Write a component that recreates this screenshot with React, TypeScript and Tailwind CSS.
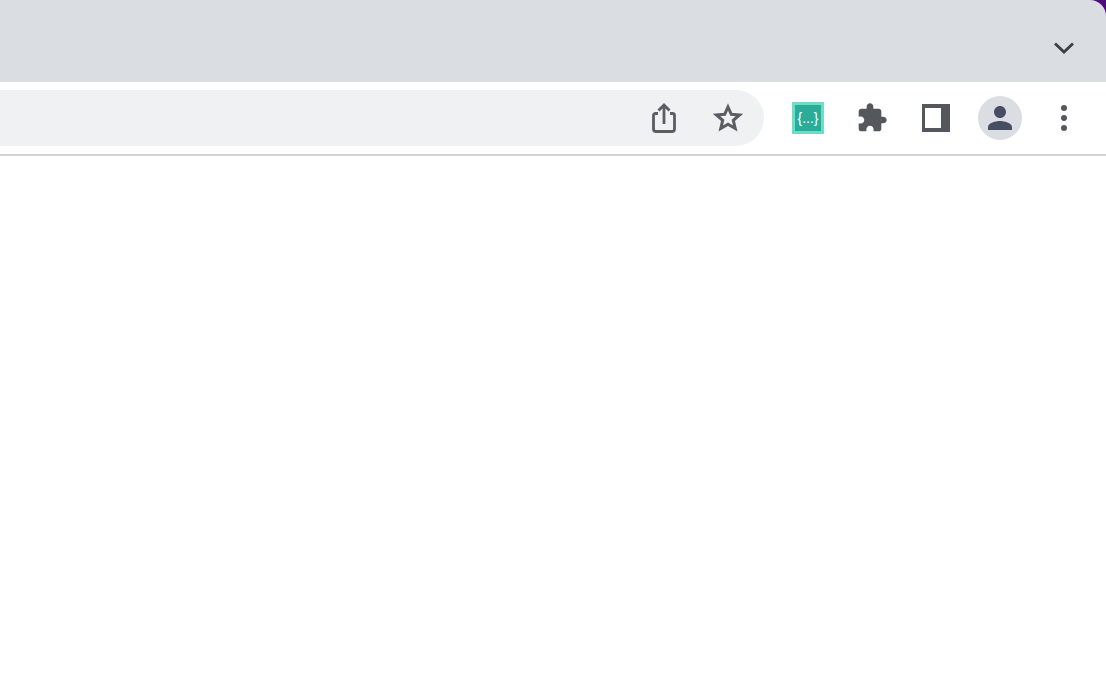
const ToolbarIcon = ({ d, className }: { d: string; className: string }) => (
  <svg viewBox="0 0 24 24" className={className} fill="currentColor">
    <path d={d} />
  </svg>
);

const puzzlePath =
  'M20.5 11H19V7c0-1.1-.9-2-2-2h-4V3.5C13 2.12 11.88 1 10.5 1S8 2.12 8 3.5V5H4c-1.1 0-1.99.9-1.99 2v3.8H3.5c1.49 0 2.7 1.21 2.7 2.7s-1.21 2.7-2.7 2.7H2V20c0 1.1.9 2 2 2h3.8v-1.5c0-1.49 1.21-2.7 2.7-2.7 1.49 0 2.7 1.21 2.7 2.7V22H17c1.1 0 2-.9 2-2v-4h1.5c1.38 0 2.5-1.12 2.5-2.5S21.88 11 20.5 11z';
const personPath =
  'M12 12c2.21 0 4-1.79 4-4s-1.79-4-4-4-4 1.79-4 4 1.79 4 4 4zm0 2c-2.67 0-8 1.34-8 4v2h16v-2c0-2.66-5.33-4-8-4z';

export default function App() {
  return (
    <div className="relative flex h-[674px] w-[1106px] flex-col overflow-hidden bg-white font-['Liberation_Sans',sans-serif]">
      {/* window corner */}
      <div className="absolute right-0 top-0 h-[16px] w-[16px] bg-[#4a0d78]">
        <div className="h-full w-full rounded-tr-[16px] bg-[#dadde1]" />
      </div>

      {/* tab strip */}
      <div className="flex h-[82px] shrink-0 justify-end bg-[#dadde1] pr-[32px] pt-[38px]">
        <svg viewBox="0 0 20 20" className="h-[20px] w-[20px] text-[#3c4043]" fill="none" stroke="currentColor" strokeWidth="2.8">
          <path d="M1 5.5 L10 14 L19 5.5" />
        </svg>
      </div>

      {/* toolbar */}
      <div className="flex h-[74px] shrink-0 items-center border-b-2 border-[#d4d4d5] text-[#5a5d62]">
        <div className="flex h-[56px] w-[764px] shrink-0 items-center justify-end rounded-r-[28px] bg-[#eff1f3] pr-[21px]">
          <svg viewBox="0 0 28 32" className="mr-[35px] h-[32px] w-[28px]" fill="none" stroke="currentColor" strokeWidth="2.8">
            <path d="M8 11.5 H5.5 a2 2 0 0 0 -2 2 V27 a2.5 2.5 0 0 0 2.5 2.5 H22 a2.5 2.5 0 0 0 2.5 -2.5 V13.5 a2 2 0 0 0 -2 -2 H20" />
            <path d="M14 22 V3.5 M8.5 8.5 L14 3 L19.5 8.5" />
          </svg>
          <svg viewBox="0 0 30 30" className="h-[30px] w-[30px]" fill="none" stroke="currentColor" strokeWidth="3" strokeLinejoin="miter">
            <path d="M15 4 L18.3 11.3 L26.5 12 L20.3 17.4 L22.2 25.5 L15 21.2 L7.8 25.5 L9.7 17.4 L3.5 12 L11.7 11.3 Z" />
          </svg>
        </div>

        <div className="ml-[28px] flex h-[32px] w-[32px] shrink-0 items-center justify-center border-[3px] border-[#6fdcc8] bg-[#2bac98] pb-[1px] text-[14px] leading-none text-white">
          {'{...}'}
        </div>

        <ToolbarIcon d={puzzlePath} className="ml-[32px] h-[32px] w-[32px] shrink-0 text-[#54575c]" />

        <div className="ml-[34px] flex h-[28px] w-[28px] shrink-0 border-y-[4px] border-l-[3px] border-r-[9px] border-[#54575c] bg-white" />

        <div className="ml-[28px] flex h-[44px] w-[44px] shrink-0 items-center justify-center rounded-full bg-[#dadde1]">
          <ToolbarIcon d={personPath} className="h-[36px] w-[36px] text-[#474e62]" />
        </div>

        <div className="ml-[39px] flex shrink-0 flex-col gap-[4px]">
          <div className="h-[6px] w-[6px] rounded-full bg-[#54575c]" />
          <div className="h-[6px] w-[6px] rounded-full bg-[#54575c]" />
          <div className="h-[6px] w-[6px] rounded-full bg-[#54575c]" />
        </div>
      </div>
    </div>
  );
}
